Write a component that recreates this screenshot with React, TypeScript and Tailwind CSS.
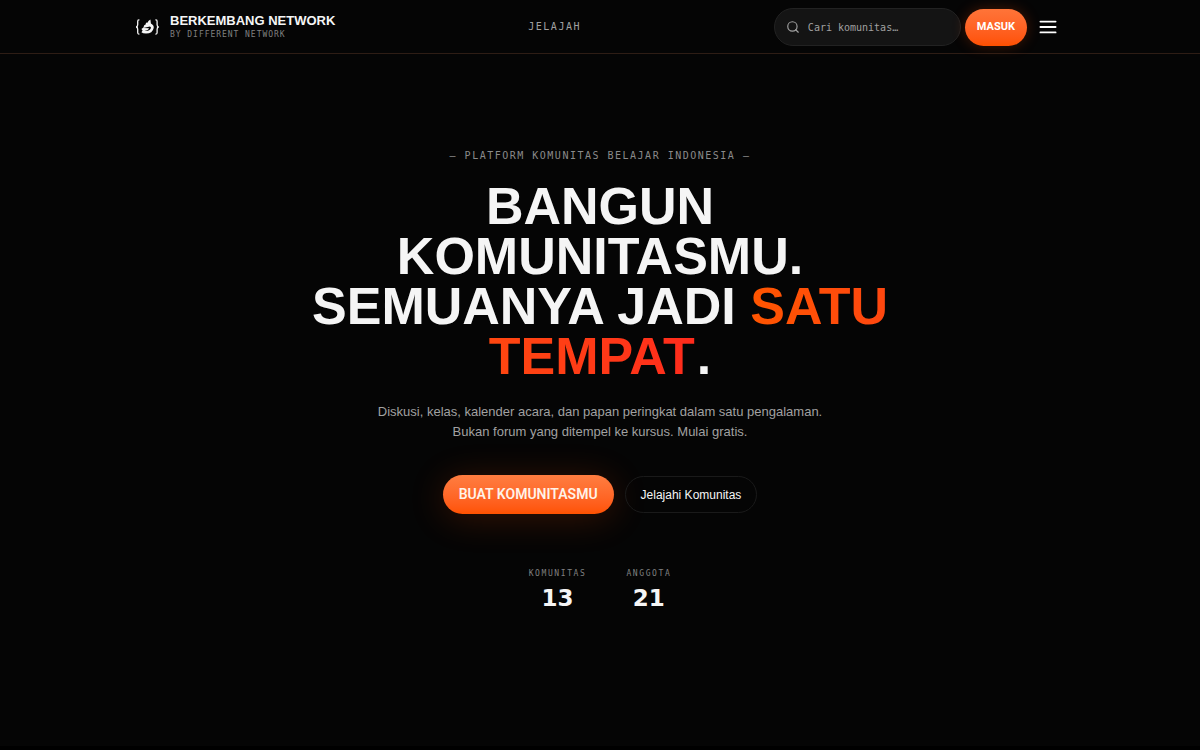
import { Search } from "lucide-react";

const stats = [
  { label: "Komunitas", value: 13 },
  { label: "Anggota", value: 21 },
];

function Logo() {
  return (
    <svg viewBox="0 0 24 24" className="size-6 shrink-0" aria-hidden="true">
      <g fill="none" stroke="#f5f5f5" strokeWidth="1.3">
        <path d="M4.4 4.9H3.8Q2.7 4.9 2.7 6.4V9.8Q2.7 11.8 1.1 12Q2.7 12.2 2.7 14.2V17.6Q2.7 19.1 3.8 19.1H4.4" />
        <path d="M20.4 4.9H21Q22.1 4.9 22.1 6.4V9.8Q22.1 11.8 23.7 12Q22.1 12.2 22.1 14.2V17.6Q22.1 19.1 21 19.1H20.4" />
      </g>
      <path
        fill="#f5f5f5"
        fillRule="evenodd"
        d="M15.4 4.6L15.9 8.4Q19.2 10 18.7 13Q17.6 18.6 11 18.6Q7.8 18.6 6.4 17.2L7.6 15.6L6.4 14L8.4 12.6L9.2 10.2L10.6 9.6L11 7.8L12.8 7.6L13.4 6ZM8.2 13L14 13.2Q13.4 15.2 9.6 15.8Q15.4 16.4 16 12.4L15 11.4Z"
      />
    </svg>
  );
}

function Header() {
  return (
    <header className="border-b border-[#2e1d15] bg-[#050505]">
      <div className="mx-auto flex max-w-[960px] items-center justify-between px-[15px] pt-2 pb-[7px]">
        <a href="#" className="flex items-center gap-[11px]">
          <Logo />
          <span className="flex flex-col">
            <span className="font-['Liberation_Sans',sans-serif] text-[13px] leading-4 font-bold text-neutral-100 uppercase">
              Berkembang Network
            </span>
            <span className="font-['DejaVu_Sans_Mono',monospace] text-[8px] leading-3 tracking-[0.12em] text-[#808080] uppercase">
              by Different Network
            </span>
          </span>
        </a>

        <nav className="flex">
          <a
            href="#jelajah"
            className="font-['DejaVu_Sans_Mono',monospace] text-[10px] leading-4 tracking-[0.15em] text-neutral-400 uppercase"
          >
            Jelajah
          </a>
        </nav>

        <div className="flex items-center gap-1">
          <label className="flex h-[38px] w-[187px] items-center gap-2 rounded-full border border-[#222] bg-[#141414] px-[11px]">
            <Search size={14} strokeWidth={2} className="shrink-0 text-neutral-400" />
            <input
              type="search"
              aria-label="Cari komunitas"
              placeholder="Cari komunitas…"
              className="w-full min-w-0 bg-transparent font-['DejaVu_Sans_Mono',monospace] text-[10px] text-neutral-100 outline-none placeholder:text-neutral-400"
            />
          </label>
          <button
            type="button"
            className="h-[37px] rounded-full bg-linear-to-b from-[#ff7438] to-[#ff5000] px-3 font-['Roboto',sans-serif] text-[11px] font-bold text-white uppercase shadow-[0_0_14px_rgba(255,80,0,0.25)]"
          >
            Masuk
          </button>
          <button
            type="button"
            aria-label="Menu"
            className="flex size-[34px] items-center justify-center text-white"
          >
            <svg viewBox="0 0 18 14" className="h-3.5 w-[18px]" aria-hidden="true">
              <path
                d="M1.4 1.6H16.6M1.4 7H16.6M1.4 12.4H16.6"
                stroke="currentColor"
                strokeWidth="1.8"
                strokeLinecap="round"
              />
            </svg>
          </button>
        </div>
      </div>
    </header>
  );
}

function Hero() {
  return (
    <section className="flex flex-col items-center bg-[#050505] px-4 pt-[94px] pb-[133px] text-center">
      <p className="font-['DejaVu_Sans_Mono',monospace] text-[10px] leading-4 tracking-[0.15em] text-[#8a8a8a] uppercase">
        — Platform komunitas belajar Indonesia —
      </p>

      <h1 className="mt-[17px] font-['Liberation_Sans',sans-serif] text-[52px] leading-[50px] font-bold text-neutral-100 uppercase">
        Bangun
        <br />
        Komunitasmu.
        <br />
        Semuanya jadi{" "}
        <span className="bg-linear-to-r from-[#ff5500] to-[#ff2a1c] bg-clip-text pr-0.5 text-transparent">
          satu
          <br />
          tempat
        </span>
        .
      </h1>

      <p className="mt-[21px] font-['Liberation_Sans',sans-serif] text-[13px] leading-5 text-neutral-400">
        Diskusi, kelas, kalender acara, dan papan peringkat dalam satu pengalaman.
        <br />
        Bukan forum yang ditempel ke kursus. Mulai gratis.
      </p>

      <div className="mt-[33px] flex items-center gap-[11px]">
        <button
          type="button"
          className="h-[39px] rounded-full bg-linear-to-b from-[#ff7d40] to-[#ff5200] px-4 font-['Roboto',sans-serif] text-[14px] font-semibold text-[#fff3e8] uppercase shadow-[0_4px_36px_rgba(255,80,0,0.2)]"
        >
          Buat Komunitasmu
        </button>
        <a
          href="#jelajah"
          className="flex h-[37px] items-center rounded-full border border-[#1a1a1a] px-[15px] font-['Liberation_Sans',sans-serif] text-[12px] leading-4 text-neutral-100"
        >
          Jelajahi Komunitas
        </a>
      </div>

      <dl className="mt-[54px] flex gap-10">
        {stats.map((stat) => (
          <div key={stat.label} className="flex flex-col items-center">
            <dt className="font-['DejaVu_Sans_Mono',monospace] text-[8px] leading-3 tracking-[0.2em] text-[#808080] uppercase">
              {stat.label}
            </dt>
            <dd className="mt-[3px] font-['DejaVu_Sans',sans-serif] text-[23px] leading-[30px] font-bold text-neutral-100">
              {stat.value}
            </dd>
          </div>
        ))}
      </dl>
    </section>
  );
}

export default function App() {
  return (
    <div className="min-h-screen bg-black">
      <Header />
      <main>
        <Hero />
      </main>
    </div>
  );
}
